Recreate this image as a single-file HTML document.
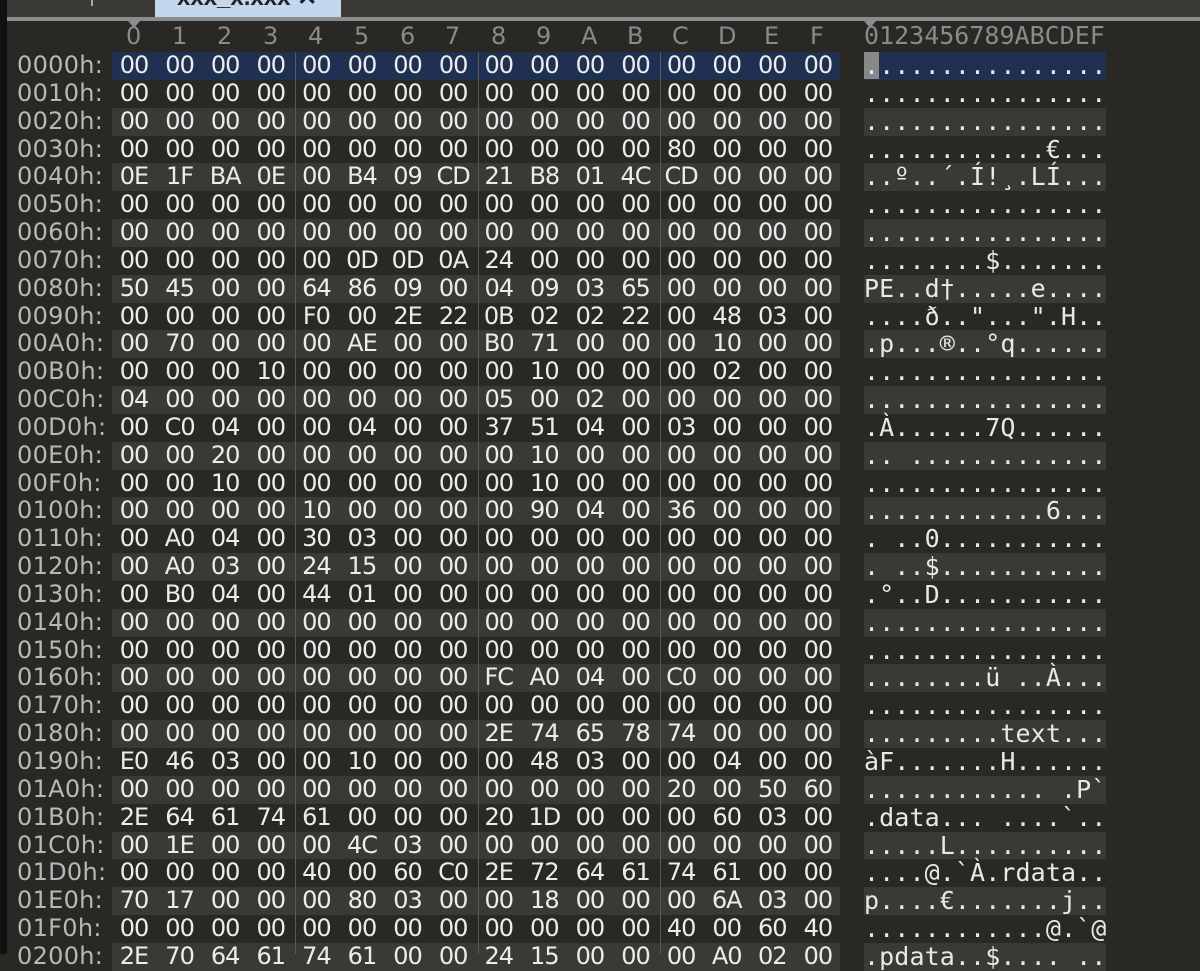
<!DOCTYPE html>
<html><head><meta charset="utf-8"><style>
*{margin:0;padding:0;box-sizing:border-box}
body{width:1200px;height:954px;overflow:hidden;background:#292824;position:relative;font-family:"DejaVu Sans Mono","Liberation Mono",monospace;}
#left{position:absolute;left:0;top:0;width:7px;height:954px;background:#111}
#tabs{position:absolute;left:7px;top:0;width:1193px;height:18px;background:#3b3a36}
#tab{position:absolute;left:148px;top:0;width:186px;height:20px;background:#c3d8ef;overflow:hidden}
#tab span{position:absolute;left:22px;top:-17px;font:bold 24px "Liberation Sans",sans-serif;color:#222}
#sep{position:absolute;left:84px;top:0;width:2px;height:6px;background:#aaa}
#line{position:absolute;left:7px;top:17px;width:1193px;height:4px;background:#8c8c8c}
.tri{position:absolute;top:21px;width:0;height:0;border-left:6px solid transparent;border-right:6px solid transparent;border-top:7px solid #8c8c8c}
.hdr{position:absolute;top:22px;font:24px "DejaVu Sans",sans-serif;color:#8a8a8a}
.row{position:absolute;left:0;height:27.84px;width:1200px}
.addr{position:absolute;left:17px;top:0;font:24px "DejaVu Sans",sans-serif;color:#b8b8b8;line-height:27px;letter-spacing:0.3px}
.hex{position:absolute;left:111.2px;top:0;display:flex;font:24px "DejaVu Sans",sans-serif;color:#ececec;line-height:27px}
.hex span{width:45.6px;text-align:center;letter-spacing:-1px}
.asc{position:absolute;left:864px;top:0;font:25px "DejaVu Sans Mono",monospace;color:#e8e8e8;line-height:27px;white-space:pre;letter-spacing:0.1px}
.bgh{position:absolute;left:112px;width:728px;top:0;height:27.84px}
.bga{position:absolute;left:864px;width:242px;top:0;height:27.84px}
.l .bgh,.l .bga{background:#3a3935}
.s .bgh,.s .bga{background:#1f3050}
.vl{position:absolute;top:52px;width:1px;height:902px;background:#5a5955}
#cur{position:absolute;left:864px;top:52px;width:15px;height:27px;background:#888}
</style></head><body>
<div id="left"></div>
<div id="tabs"><div id="sep"></div><div id="tab"><span>xxx_x.xxx ✕</span></div></div>
<div id="line"></div>
<div class="tri" style="left:128px"></div>
<div class="tri" style="left:864px"></div>
<div class="hdr" style="left:126px">0</div><div class="hdr" style="left:172px">1</div><div class="hdr" style="left:217px">2</div><div class="hdr" style="left:263px">3</div><div class="hdr" style="left:308px">4</div><div class="hdr" style="left:354px">5</div><div class="hdr" style="left:400px">6</div><div class="hdr" style="left:445px">7</div><div class="hdr" style="left:491px">8</div><div class="hdr" style="left:536px">9</div><div class="hdr" style="left:581px">A</div><div class="hdr" style="left:627px">B</div><div class="hdr" style="left:672px">C</div><div class="hdr" style="left:718px">D</div><div class="hdr" style="left:764px">E</div><div class="hdr" style="left:810px">F</div>
<div class="hdr" style="left:864px;font-family:'DejaVu Sans Mono',monospace;font-size:25px;top:21px">0123456789ABCDEF</div>

<div class="row s" style="top:52px"><div class="bgh"></div><div class="bga"></div><div class="addr">0000h:</div><div class="hex"><span>00</span><span>00</span><span>00</span><span>00</span><span>00</span><span>00</span><span>00</span><span>00</span><span>00</span><span>00</span><span>00</span><span>00</span><span>00</span><span>00</span><span>00</span><span>00</span></div></div>
<div id="cur"></div>
<div class="row s" style="top:52px"><div class="asc">................</div></div>
<div class="row" style="top:79.84px"><div class="bgh"></div><div class="bga"></div><div class="addr">0010h:</div><div class="hex"><span>00</span><span>00</span><span>00</span><span>00</span><span>00</span><span>00</span><span>00</span><span>00</span><span>00</span><span>00</span><span>00</span><span>00</span><span>00</span><span>00</span><span>00</span><span>00</span></div><div class="asc">................</div></div>
<div class="row l" style="top:107.68px"><div class="bgh"></div><div class="bga"></div><div class="addr">0020h:</div><div class="hex"><span>00</span><span>00</span><span>00</span><span>00</span><span>00</span><span>00</span><span>00</span><span>00</span><span>00</span><span>00</span><span>00</span><span>00</span><span>00</span><span>00</span><span>00</span><span>00</span></div><div class="asc">................</div></div>
<div class="row" style="top:135.52px"><div class="bgh"></div><div class="bga"></div><div class="addr">0030h:</div><div class="hex"><span>00</span><span>00</span><span>00</span><span>00</span><span>00</span><span>00</span><span>00</span><span>00</span><span>00</span><span>00</span><span>00</span><span>00</span><span>80</span><span>00</span><span>00</span><span>00</span></div><div class="asc">............€...</div></div>
<div class="row l" style="top:163.36px"><div class="bgh"></div><div class="bga"></div><div class="addr">0040h:</div><div class="hex"><span>0E</span><span>1F</span><span>BA</span><span>0E</span><span>00</span><span>B4</span><span>09</span><span>CD</span><span>21</span><span>B8</span><span>01</span><span>4C</span><span>CD</span><span>00</span><span>00</span><span>00</span></div><div class="asc">..º..´.Í!¸.LÍ...</div></div>
<div class="row" style="top:191.2px"><div class="bgh"></div><div class="bga"></div><div class="addr">0050h:</div><div class="hex"><span>00</span><span>00</span><span>00</span><span>00</span><span>00</span><span>00</span><span>00</span><span>00</span><span>00</span><span>00</span><span>00</span><span>00</span><span>00</span><span>00</span><span>00</span><span>00</span></div><div class="asc">................</div></div>
<div class="row l" style="top:219.04px"><div class="bgh"></div><div class="bga"></div><div class="addr">0060h:</div><div class="hex"><span>00</span><span>00</span><span>00</span><span>00</span><span>00</span><span>00</span><span>00</span><span>00</span><span>00</span><span>00</span><span>00</span><span>00</span><span>00</span><span>00</span><span>00</span><span>00</span></div><div class="asc">................</div></div>
<div class="row" style="top:246.88px"><div class="bgh"></div><div class="bga"></div><div class="addr">0070h:</div><div class="hex"><span>00</span><span>00</span><span>00</span><span>00</span><span>00</span><span>0D</span><span>0D</span><span>0A</span><span>24</span><span>00</span><span>00</span><span>00</span><span>00</span><span>00</span><span>00</span><span>00</span></div><div class="asc">........$.......</div></div>
<div class="row l" style="top:274.72px"><div class="bgh"></div><div class="bga"></div><div class="addr">0080h:</div><div class="hex"><span>50</span><span>45</span><span>00</span><span>00</span><span>64</span><span>86</span><span>09</span><span>00</span><span>04</span><span>09</span><span>03</span><span>65</span><span>00</span><span>00</span><span>00</span><span>00</span></div><div class="asc">PE..d†.....e....</div></div>
<div class="row" style="top:302.56px"><div class="bgh"></div><div class="bga"></div><div class="addr">0090h:</div><div class="hex"><span>00</span><span>00</span><span>00</span><span>00</span><span>F0</span><span>00</span><span>2E</span><span>22</span><span>0B</span><span>02</span><span>02</span><span>22</span><span>00</span><span>48</span><span>03</span><span>00</span></div><div class="asc">....ð.."...".H..</div></div>
<div class="row l" style="top:330.4px"><div class="bgh"></div><div class="bga"></div><div class="addr">00A0h:</div><div class="hex"><span>00</span><span>70</span><span>00</span><span>00</span><span>00</span><span>AE</span><span>00</span><span>00</span><span>B0</span><span>71</span><span>00</span><span>00</span><span>00</span><span>10</span><span>00</span><span>00</span></div><div class="asc">.p...®..°q......</div></div>
<div class="row" style="top:358.24px"><div class="bgh"></div><div class="bga"></div><div class="addr">00B0h:</div><div class="hex"><span>00</span><span>00</span><span>00</span><span>10</span><span>00</span><span>00</span><span>00</span><span>00</span><span>00</span><span>10</span><span>00</span><span>00</span><span>00</span><span>02</span><span>00</span><span>00</span></div><div class="asc">................</div></div>
<div class="row l" style="top:386.08px"><div class="bgh"></div><div class="bga"></div><div class="addr">00C0h:</div><div class="hex"><span>04</span><span>00</span><span>00</span><span>00</span><span>00</span><span>00</span><span>00</span><span>00</span><span>05</span><span>00</span><span>02</span><span>00</span><span>00</span><span>00</span><span>00</span><span>00</span></div><div class="asc">................</div></div>
<div class="row" style="top:413.92px"><div class="bgh"></div><div class="bga"></div><div class="addr">00D0h:</div><div class="hex"><span>00</span><span>C0</span><span>04</span><span>00</span><span>00</span><span>04</span><span>00</span><span>00</span><span>37</span><span>51</span><span>04</span><span>00</span><span>03</span><span>00</span><span>00</span><span>00</span></div><div class="asc">.À......7Q......</div></div>
<div class="row l" style="top:441.76px"><div class="bgh"></div><div class="bga"></div><div class="addr">00E0h:</div><div class="hex"><span>00</span><span>00</span><span>20</span><span>00</span><span>00</span><span>00</span><span>00</span><span>00</span><span>00</span><span>10</span><span>00</span><span>00</span><span>00</span><span>00</span><span>00</span><span>00</span></div><div class="asc">.. .............</div></div>
<div class="row" style="top:469.6px"><div class="bgh"></div><div class="bga"></div><div class="addr">00F0h:</div><div class="hex"><span>00</span><span>00</span><span>10</span><span>00</span><span>00</span><span>00</span><span>00</span><span>00</span><span>00</span><span>10</span><span>00</span><span>00</span><span>00</span><span>00</span><span>00</span><span>00</span></div><div class="asc">................</div></div>
<div class="row l" style="top:497.44px"><div class="bgh"></div><div class="bga"></div><div class="addr">0100h:</div><div class="hex"><span>00</span><span>00</span><span>00</span><span>00</span><span>10</span><span>00</span><span>00</span><span>00</span><span>00</span><span>90</span><span>04</span><span>00</span><span>36</span><span>00</span><span>00</span><span>00</span></div><div class="asc">............6...</div></div>
<div class="row" style="top:525.28px"><div class="bgh"></div><div class="bga"></div><div class="addr">0110h:</div><div class="hex"><span>00</span><span>A0</span><span>04</span><span>00</span><span>30</span><span>03</span><span>00</span><span>00</span><span>00</span><span>00</span><span>00</span><span>00</span><span>00</span><span>00</span><span>00</span><span>00</span></div><div class="asc">. ..0...........</div></div>
<div class="row l" style="top:553.12px"><div class="bgh"></div><div class="bga"></div><div class="addr">0120h:</div><div class="hex"><span>00</span><span>A0</span><span>03</span><span>00</span><span>24</span><span>15</span><span>00</span><span>00</span><span>00</span><span>00</span><span>00</span><span>00</span><span>00</span><span>00</span><span>00</span><span>00</span></div><div class="asc">. ..$...........</div></div>
<div class="row" style="top:580.96px"><div class="bgh"></div><div class="bga"></div><div class="addr">0130h:</div><div class="hex"><span>00</span><span>B0</span><span>04</span><span>00</span><span>44</span><span>01</span><span>00</span><span>00</span><span>00</span><span>00</span><span>00</span><span>00</span><span>00</span><span>00</span><span>00</span><span>00</span></div><div class="asc">.°..D...........</div></div>
<div class="row l" style="top:608.8px"><div class="bgh"></div><div class="bga"></div><div class="addr">0140h:</div><div class="hex"><span>00</span><span>00</span><span>00</span><span>00</span><span>00</span><span>00</span><span>00</span><span>00</span><span>00</span><span>00</span><span>00</span><span>00</span><span>00</span><span>00</span><span>00</span><span>00</span></div><div class="asc">................</div></div>
<div class="row" style="top:636.64px"><div class="bgh"></div><div class="bga"></div><div class="addr">0150h:</div><div class="hex"><span>00</span><span>00</span><span>00</span><span>00</span><span>00</span><span>00</span><span>00</span><span>00</span><span>00</span><span>00</span><span>00</span><span>00</span><span>00</span><span>00</span><span>00</span><span>00</span></div><div class="asc">................</div></div>
<div class="row l" style="top:664.48px"><div class="bgh"></div><div class="bga"></div><div class="addr">0160h:</div><div class="hex"><span>00</span><span>00</span><span>00</span><span>00</span><span>00</span><span>00</span><span>00</span><span>00</span><span>FC</span><span>A0</span><span>04</span><span>00</span><span>C0</span><span>00</span><span>00</span><span>00</span></div><div class="asc">........ü ..À...</div></div>
<div class="row" style="top:692.32px"><div class="bgh"></div><div class="bga"></div><div class="addr">0170h:</div><div class="hex"><span>00</span><span>00</span><span>00</span><span>00</span><span>00</span><span>00</span><span>00</span><span>00</span><span>00</span><span>00</span><span>00</span><span>00</span><span>00</span><span>00</span><span>00</span><span>00</span></div><div class="asc">................</div></div>
<div class="row l" style="top:720.16px"><div class="bgh"></div><div class="bga"></div><div class="addr">0180h:</div><div class="hex"><span>00</span><span>00</span><span>00</span><span>00</span><span>00</span><span>00</span><span>00</span><span>00</span><span>2E</span><span>74</span><span>65</span><span>78</span><span>74</span><span>00</span><span>00</span><span>00</span></div><div class="asc">.........text...</div></div>
<div class="row" style="top:748px"><div class="bgh"></div><div class="bga"></div><div class="addr">0190h:</div><div class="hex"><span>E0</span><span>46</span><span>03</span><span>00</span><span>00</span><span>10</span><span>00</span><span>00</span><span>00</span><span>48</span><span>03</span><span>00</span><span>00</span><span>04</span><span>00</span><span>00</span></div><div class="asc">àF.......H......</div></div>
<div class="row l" style="top:775.84px"><div class="bgh"></div><div class="bga"></div><div class="addr">01A0h:</div><div class="hex"><span>00</span><span>00</span><span>00</span><span>00</span><span>00</span><span>00</span><span>00</span><span>00</span><span>00</span><span>00</span><span>00</span><span>00</span><span>20</span><span>00</span><span>50</span><span>60</span></div><div class="asc">............ .P`</div></div>
<div class="row" style="top:803.68px"><div class="bgh"></div><div class="bga"></div><div class="addr">01B0h:</div><div class="hex"><span>2E</span><span>64</span><span>61</span><span>74</span><span>61</span><span>00</span><span>00</span><span>00</span><span>20</span><span>1D</span><span>00</span><span>00</span><span>00</span><span>60</span><span>03</span><span>00</span></div><div class="asc">.data... ....`..</div></div>
<div class="row l" style="top:831.52px"><div class="bgh"></div><div class="bga"></div><div class="addr">01C0h:</div><div class="hex"><span>00</span><span>1E</span><span>00</span><span>00</span><span>00</span><span>4C</span><span>03</span><span>00</span><span>00</span><span>00</span><span>00</span><span>00</span><span>00</span><span>00</span><span>00</span><span>00</span></div><div class="asc">.....L..........</div></div>
<div class="row" style="top:859.36px"><div class="bgh"></div><div class="bga"></div><div class="addr">01D0h:</div><div class="hex"><span>00</span><span>00</span><span>00</span><span>00</span><span>40</span><span>00</span><span>60</span><span>C0</span><span>2E</span><span>72</span><span>64</span><span>61</span><span>74</span><span>61</span><span>00</span><span>00</span></div><div class="asc">....@.`À.rdata..</div></div>
<div class="row l" style="top:887.2px"><div class="bgh"></div><div class="bga"></div><div class="addr">01E0h:</div><div class="hex"><span>70</span><span>17</span><span>00</span><span>00</span><span>00</span><span>80</span><span>03</span><span>00</span><span>00</span><span>18</span><span>00</span><span>00</span><span>00</span><span>6A</span><span>03</span><span>00</span></div><div class="asc">p....€.......j..</div></div>
<div class="row" style="top:915.04px"><div class="bgh"></div><div class="bga"></div><div class="addr">01F0h:</div><div class="hex"><span>00</span><span>00</span><span>00</span><span>00</span><span>00</span><span>00</span><span>00</span><span>00</span><span>00</span><span>00</span><span>00</span><span>00</span><span>40</span><span>00</span><span>60</span><span>40</span></div><div class="asc">............@.`@</div></div>
<div class="row l" style="top:942.88px"><div class="bgh"></div><div class="bga"></div><div class="addr">0200h:</div><div class="hex"><span>2E</span><span>70</span><span>64</span><span>61</span><span>74</span><span>61</span><span>00</span><span>00</span><span>24</span><span>15</span><span>00</span><span>00</span><span>00</span><span>A0</span><span>02</span><span>00</span></div><div class="asc">.pdata..$.... ..</div></div>

<div class="vl" style="left:295px"></div>
<div class="vl" style="left:478px"></div>
<div class="vl" style="left:660px"></div>
</body></html>
